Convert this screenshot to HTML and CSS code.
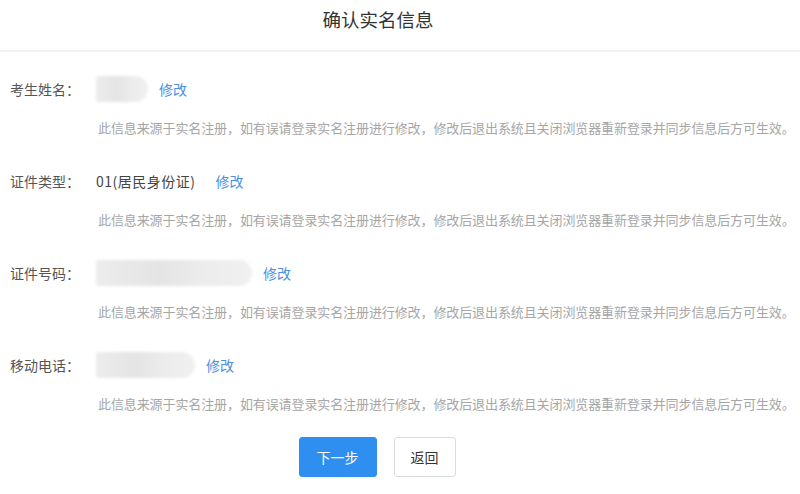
FILE: index.html
```html
<!DOCTYPE html>
<html lang="zh-CN">
<head>
    <meta charset="UTF-8">
    <meta name="viewport" content="width=device-width, initial-scale=1.0">
    <title>确认实名信息</title>
    <link rel="stylesheet" href="styles.css">
</head>
<body>
    <div class="title">确认实名信息</div>

    <div class="form">
        <div class="row">
            <div class="line">
                <span class="label">考生姓名：</span>
                <span class="mask mask-name"></span>
                <a class="edit">修改</a>
            </div>
            <div class="note">此信息来源于实名注册，如有误请登录实名注册进行修改，修改后退出系统且关闭浏览器重新登录并同步信息后方可生效。</div>
        </div>

        <div class="row">
            <div class="line">
                <span class="label">证件类型：</span>
                <span class="value">01(居民身份证)</span>
                <a class="edit">修改</a>
            </div>
            <div class="note">此信息来源于实名注册，如有误请登录实名注册进行修改，修改后退出系统且关闭浏览器重新登录并同步信息后方可生效。</div>
        </div>

        <div class="row">
            <div class="line">
                <span class="label">证件号码：</span>
                <span class="mask mask-id"></span>
                <a class="edit">修改</a>
            </div>
            <div class="note">此信息来源于实名注册，如有误请登录实名注册进行修改，修改后退出系统且关闭浏览器重新登录并同步信息后方可生效。</div>
        </div>

        <div class="row">
            <div class="line">
                <span class="label">移动电话：</span>
                <span class="mask mask-phone"></span>
                <a class="edit">修改</a>
            </div>
            <div class="note">此信息来源于实名注册，如有误请登录实名注册进行修改，修改后退出系统且关闭浏览器重新登录并同步信息后方可生效。</div>
        </div>
    </div>

    <div class="actions">
        <button class="btn btn-primary">下一步</button>
        <button class="btn">返回</button>
    </div>
</body>
</html>
```

FILE: styles.css
```css
body {
    margin: 0;
    font: 14px "Noto Sans CJK SC", "Noto Sans", sans-serif;
    color: #333;
    background: #fff;
}
.title {
    height: 50px;
    line-height: 38px;
    padding-right: 44px;
    text-align: center;
    font-size: 18.5px;
    color: #333;
    border-bottom: 2px solid #f2f2f2;
}
.form {
    padding: 22px 0 0 10px;
}
.row {
    height: 92px;
}
.row:last-child {
    height: 64px;
}
.line {
    display: flex;
    align-items: center;
    height: 30px;
}
.label {
    width: 86px;
    color: #555;
}
.value {
    margin-right: 9px;
    letter-spacing: 0.5px;
    color: #444;
}
.edit {
    margin-left: 11px;
    color: #4a90e2;
    cursor: pointer;
}
.mask {
    display: inline-block;
    height: 26px;
    border-radius: 3px 14px 14px 3px;
    background: linear-gradient(90deg, #ececec, #e4e4e4 40%, #ececec 70%, #f0f0f0);
    filter: blur(1.5px);
}
.mask-name {
    width: 52px;
}
.mask-id {
    width: 156px;
}
.mask-phone {
    width: 99px;
}
.note {
    margin-top: 14px;
    padding-left: 88px;
    line-height: 20px;
    font-size: 13px;
    letter-spacing: -0.1px;
    color: #a6a6a6;
    white-space: nowrap;
}
.actions {
    display: flex;
    justify-content: center;
    gap: 17px;
    padding: 23px 46px 0 0;
}
.btn {
    height: 40px;
    padding: 0 16px;
    font: 14px "Noto Sans CJK SC", sans-serif;
    color: #333;
    background: #fff;
    border: 1px solid #dcdcdc;
    border-radius: 3px;
}
.btn-primary {
    width: 78px;
    color: #fff;
    background: #2f8ff0;
    border-color: #2f8ff0;
}
```
